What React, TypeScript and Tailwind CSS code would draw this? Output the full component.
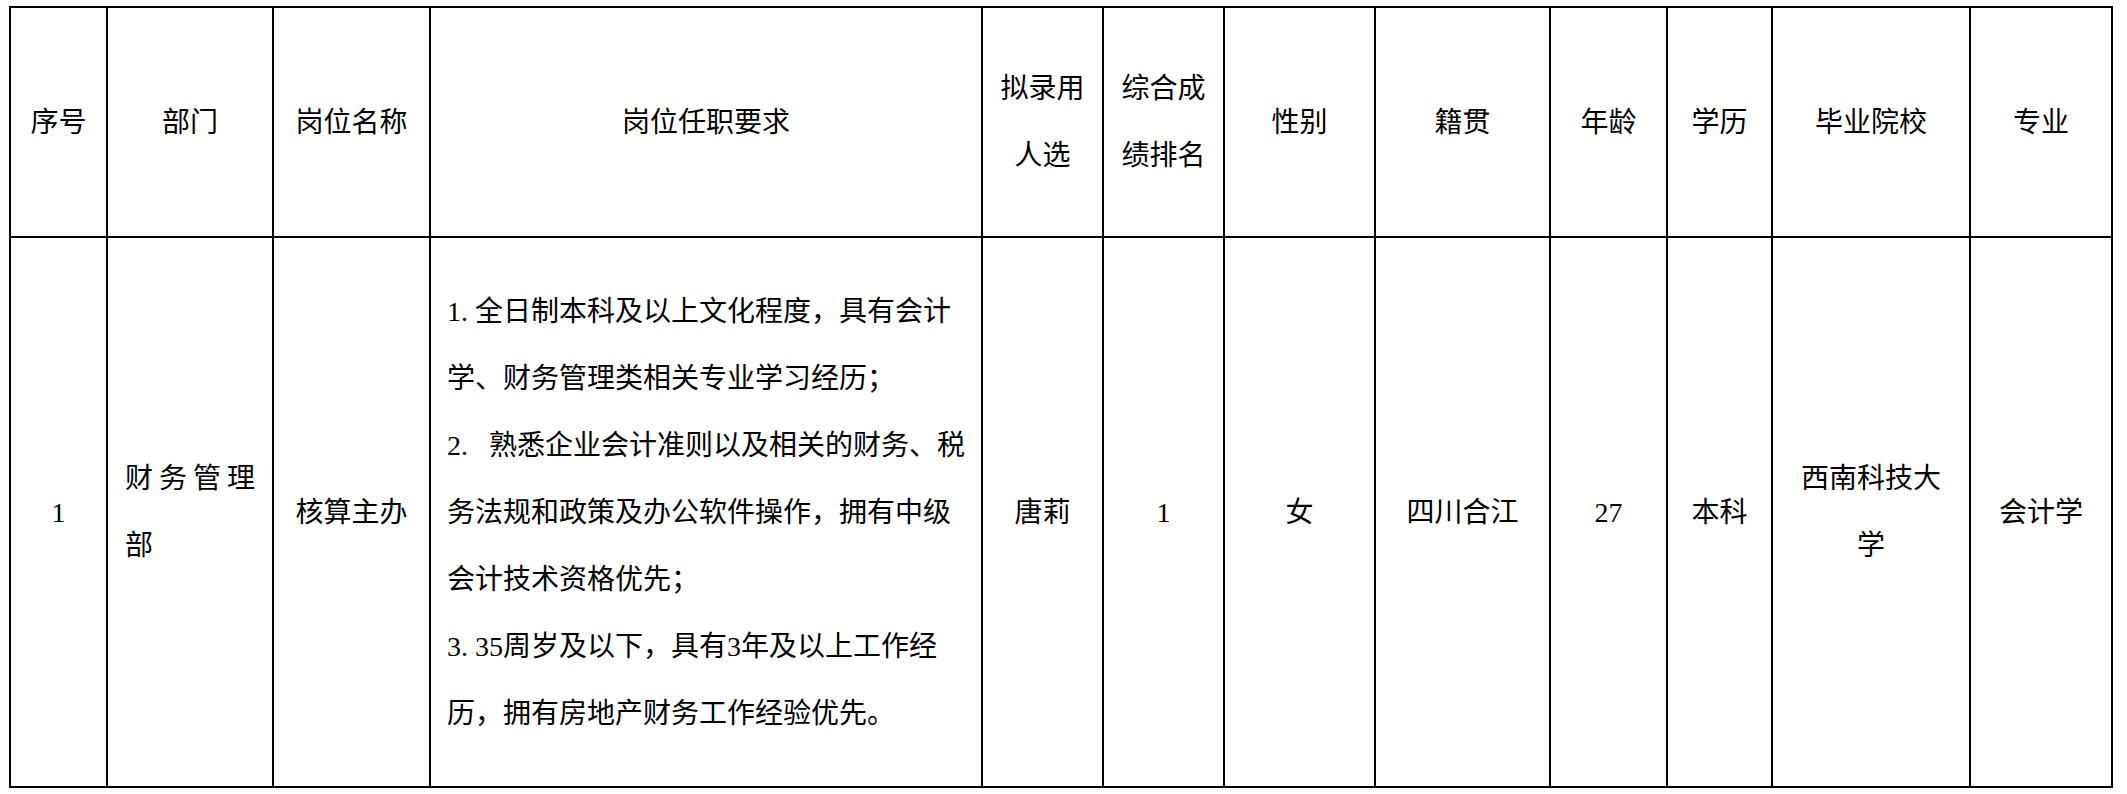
const headers = [
  "序号",
  "部门",
  "岗位名称",
  "岗位任职要求",
  "拟录用人选",
  "综合成绩排名",
  "性别",
  "籍贯",
  "年龄",
  "学历",
  "毕业院校",
  "专业",
]

const widths = [
  "w-[97px]",
  "w-[166px]",
  "w-[157px]",
  "w-[552px]",
  "w-[121px]",
  "w-[121px]",
  "w-[151px]",
  "w-[175px]",
  "w-[117px]",
  "w-[105px]",
  "w-[198px]",
  "w-[142px]",
]

// prefix is drawn with half-width cells, like the original document font
const requirementLines: [string, string][] = [
  ["1.", "全日制本科及以上文化程度，具有会计"],
  ["", "学、财务管理类相关专业学习经历；"],
  ["2. ", "熟悉企业会计准则以及相关的财务、税"],
  ["", "务法规和政策及办公软件操作，拥有中级"],
  ["", "会计技术资格优先；"],
  ["3.35", "周岁及以下，具有3年及以上工作经"],
  ["", "历，拥有房地产财务工作经验优先。"],
]

const cell = "border-2 border-black px-4 text-center align-middle"

function Prefix({ text }: { text: string }) {
  return (
    <>
      {text.split("").map((ch, i) => (
        <span key={i} className="inline-block w-[14px] whitespace-pre">
          {ch}
        </span>
      ))}
    </>
  )
}

export default function App() {
  return (
    <div
      lang="zh-CN"
      className="min-h-screen bg-white pl-[9px] pt-[6px] text-[28px] leading-[67px] text-black"
      style={{ fontFamily: '"Liberation Serif", "Noto Sans CJK SC", serif' }}
    >
      <table className="table-fixed border-collapse">
        <colgroup>
          {widths.map((w, i) => (
            <col key={i} className={w} />
          ))}
        </colgroup>
        <thead>
          <tr className="h-[230px]">
            {headers.map((h) => (
              <th key={h} className={`${cell} font-normal`}>
                {h}
              </th>
            ))}
          </tr>
        </thead>
        <tbody>
          <tr className="h-[550px]">
            <td className={cell}>1</td>
            <td className="border-2 border-black px-[17px] text-justify align-middle">
              财务管理部
            </td>
            <td className={cell}>核算主办</td>
            <td className="border-2 border-black pl-4 pr-2 text-left align-middle">
              {requirementLines.map(([prefix, rest]) => (
                <div key={rest} className="whitespace-nowrap">
                  <Prefix text={prefix} />
                  {rest}
                </div>
              ))}
            </td>
            <td className={cell}>唐莉</td>
            <td className={cell}>1</td>
            <td className={cell}>女</td>
            <td className={cell}>四川合江</td>
            <td className={cell}>27</td>
            <td className={cell}>本科</td>
            <td className={cell}>西南科技大学</td>
            <td className={cell}>会计学</td>
          </tr>
        </tbody>
      </table>
    </div>
  )
}
